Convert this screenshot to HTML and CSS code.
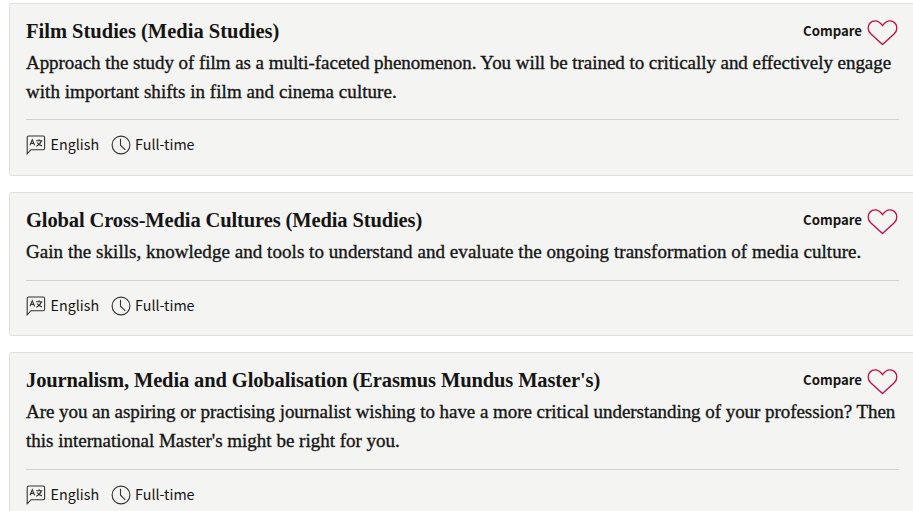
FILE: index.html
```html
<!DOCTYPE html>
<html lang="en">
<head>
  <meta charset="UTF-8">
  <title>Master's programmes</title>
  <link rel="stylesheet" href="styles.css">
</head>
<body>

  <!-- Shared icons -->
  <svg class="sprite" xmlns="http://www.w3.org/2000/svg">
    <symbol id="heart" viewBox="0 0 31 26">
      <path d="M15.5 25 L4 14.6 C2.1 12.8 .9 11 .9 8.3 C.9 4.1 3.8 .9 7.9 .9 C11.4 .9 13.6 3.2 15.5 5.7 C17.4 3.2 19.6 .9 23.1 .9 C27.2 .9 30.1 4.1 30.1 8.3 C30.1 11 28.9 12.8 27 14.6 Z"/>
    </symbol>
    <symbol id="language" viewBox="0 0 20 20">
      <path d="M1.2 18.8 V2.4 Q1.2 1 2.6 1 H17.2 Q18.6 1 18.6 2.4 V13.3 Q18.6 14.7 17.2 14.7 H5 Z"/>
      <path d="M4 10.2 L6.3 4.6 L8.6 10.2 M4.8 8.4 H7.8 M10 5.8 H16.4 M13.1 4.2 V5.8 M15.4 5.8 Q14 9.8 10.3 11.2 M11.2 7.4 Q12.6 10.2 16 10.9"/>
    </symbol>
    <symbol id="clock" viewBox="0 0 20 20">
      <circle cx="10" cy="10" r="8.9"/>
      <path d="M9.5 3.8 V10.2 L14.3 14.8"/>
    </symbol>
  </svg>

  <div class="programmes">
    <article class="card">
      <div class="card-header">
        <h2 class="title">Film Studies (Media Studies)</h2>
        <button class="compare">Compare <svg class="heart"><use href="#heart"/></svg></button>
      </div>
      <p class="description"><span class="tight">Approach the study of film as a multi-faceted phenomenon. You will be trained to critically and effectively engage</span><br><span class="loose">with important shifts in film and cinema culture.</span></p>
      <div class="meta">
        <span class="meta-item"><svg class="icon"><use href="#language"/></svg>English</span>
        <span class="meta-item"><svg class="icon"><use href="#clock"/></svg>Full-time</span>
      </div>
    </article>

    <article class="card">
      <div class="card-header">
        <h2 class="title title-long">Global Cross-Media Cultures (Media Studies)</h2>
        <button class="compare">Compare <svg class="heart"><use href="#heart"/></svg></button>
      </div>
      <p class="description"><span class="loose">Gain the skills, knowledge and tools to understand and evaluate the ongoing transformation of media culture.</span></p>
      <div class="meta">
        <span class="meta-item"><svg class="icon"><use href="#language"/></svg>English</span>
        <span class="meta-item"><svg class="icon"><use href="#clock"/></svg>Full-time</span>
      </div>
    </article>

    <article class="card">
      <div class="card-header">
        <h2 class="title title-long">Journalism, Media and Globalisation (Erasmus Mundus Master's)</h2>
        <button class="compare">Compare <svg class="heart"><use href="#heart"/></svg></button>
      </div>
      <p class="description"><span class="tight">Are you an aspiring or practising journalist wishing to have a more critical understanding of your profession? Then</span><br>this international Master's might be right for you.</p>
      <div class="meta">
        <span class="meta-item"><svg class="icon"><use href="#language"/></svg>English</span>
        <span class="meta-item"><svg class="icon"><use href="#clock"/></svg>Full-time</span>
      </div>
    </article>
  </div>

</body>
</html>
```
FILE: styles.css
```css
* {
  box-sizing: border-box;
}

body {
  margin: 0;
  height: 511px;
  overflow: hidden;
  background-color: #fff;
  color: #151515;
}

.sprite {
  display: none;
}

.programmes {
  display: flex;
  flex-direction: column;
  gap: 16.4px;
  width: 906px;
  margin-left: 9px;
  padding-top: 3.2px;
}

.card {
  background-color: #f4f4f2;
  border: 1px solid #e0e0e0;
  border-radius: 2px;
  padding: 10px 15px 14.4px 16px;
}

.card-header {
  display: flex;
  justify-content: space-between;
  align-items: center;
  height: 34px;
  margin-bottom: 1px;
}

.title {
  margin: 0;
  font-family: "Liberation Serif", serif;
  font-size: 20.5px;
  font-weight: bold;
  white-space: nowrap;
}

.title-long {
  letter-spacing: -0.12px;
}

.description {
  margin: 0;
  font-family: "Liberation Serif", serif;
  font-size: 19px;
  line-height: 28.8px;
  white-space: nowrap;
  -webkit-text-stroke: 0.35px #151515;
}

.tight {
  letter-spacing: -0.05px;
}

.loose {
  letter-spacing: 0.05px;
}

.compare {
  display: flex;
  align-items: center;
  gap: 4.5px;
  padding: 0 1.5px 0 0;
  border: none;
  background: none;
  color: #151515;
  font-family: "Noto Sans CJK SC", sans-serif;
  font-size: 13.2px;
  font-weight: bold;
  line-height: 32px;
  cursor: pointer;
}

.heart {
  width: 31px;
  height: 25.5px;
  margin-top: 2.4px;
  fill: none;
  stroke: #c0103f;
  stroke-width: 1.4;
}

.meta {
  display: flex;
  align-items: center;
  gap: 11.5px;
  height: 41px;
  margin-top: 12.6px;
  padding-top: 8.1px;
  border-top: 1px solid #d2d2d2;
  font-family: "Noto Sans CJK SC", sans-serif;
  font-size: 14.3px;
  line-height: 30px;
}

.meta-item {
  display: flex;
  align-items: center;
  gap: 4.5px;
}

.icon {
  width: 20px;
  height: 20px;
  margin-top: 2px;
  fill: none;
  stroke: #333;
  stroke-width: 1.1;
}
```
